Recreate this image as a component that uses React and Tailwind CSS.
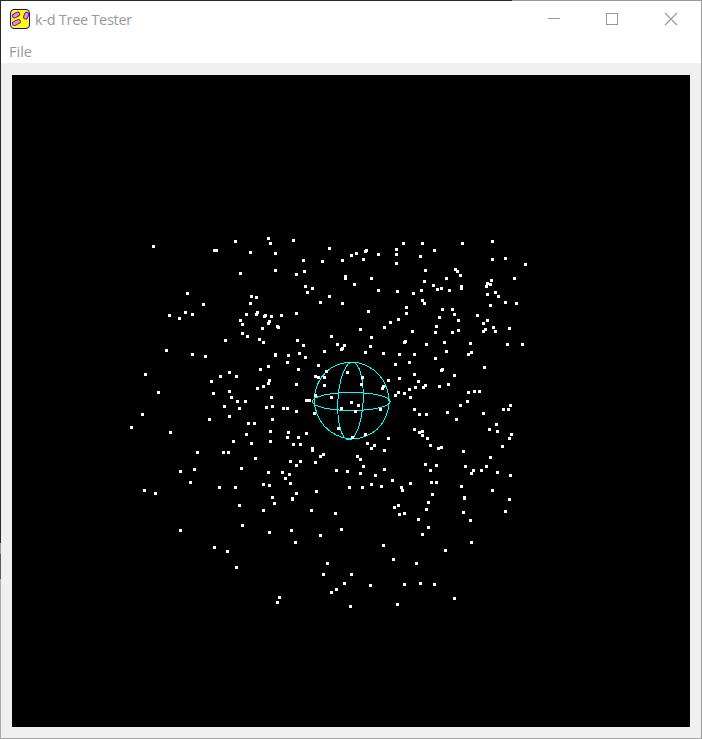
import React from "react";

// Point cloud, grouped by patch. Coordinates inside a patch are thirds of a pixel.
const PATCHES = [
  [120, 230, "100,49 283,61 289,61 346,34 391,67 361,130 202,190 250,223 394,199 409,202 391,220 148,256 178,265 196,247 217,253 379,253 412,247 409,253 361,271 367,283 367,310 382,319 418,328 316,331 139,361 217,373 256,379"],
  [250, 230, "55,25 61,40 130,31 76,70 1,67 238,55 160,91 217,94 277,91 304,76 319,70 346,64 349,61 385,73 340,88 76,121 139,133 163,124 286,139 286,145 313,163 364,145 166,169 172,187 187,175 385,181 4,199 19,202 1,220 211,217 238,199 277,220 22,247 19,253 43,259 46,256 64,259 94,256 139,250 355,244 58,274 55,280 37,295 82,289 85,292 331,298 403,292 28,328 40,337 142,331 160,346 244,319 262,343 283,346 277,355 274,358 364,322 361,349 76,373 76,376 115,376 148,370 166,382 223,364 346,367 400,370"],
  [380, 230, "70,40 127,40 49,58 49,73 121,79 163,61 247,40 337,34 337,88 376,85 436,103 49,100 136,121 226,118 232,124 241,136 199,145 403,145 133,154 160,166 172,178 184,175 208,181 244,169 244,175 319,169 322,160 331,163 334,151 52,184 100,190 124,181 127,211 133,220 322,193 346,187 355,199 376,217 409,220 331,226 79,232 79,250 187,238 217,238 178,262 223,253 235,271 292,256 55,268 31,277 13,292 322,271 310,280 97,304 169,289 166,307 217,307 235,301 310,304 316,298 340,292 346,304 388,295 76,334 73,337 139,343 193,337 271,340 382,343 427,343 10,370 58,373 103,373 199,364 265,373 274,367 166,385"],
  [120, 350, "76,73 115,127 67,193 34,232 151,247 328,67 301,79 349,79 274,94 280,130 328,124 334,142 352,154 376,154 313,169 358,175 328,199 268,208 412,115 385,220 403,220 379,253 340,274 394,280 232,307 310,307 325,307 406,325 364,355 223,358 181,364"],
  [250, 350, "55,49 31,58 112,37 145,58 205,46 229,64 196,79 205,82 223,82 223,106 292,67 337,82 334,103 415,91 400,109 397,115 58,91 55,100 40,109 22,115 139,103 64,142 67,169 49,172 100,175 112,175 139,184 196,136 244,142 304,157 325,166 274,175 316,184 391,178 193,190 169,151 178,151 67,208 13,220 61,244 115,247 112,262 145,262 169,250 61,274 4,280 130,283 151,283 187,295 187,301 16,325 121,334 151,334 139,346 196,337 211,319 220,313 265,235 307,262 346,253 352,280 373,286 364,295 403,301 415,265 322,319 331,328 340,349 259,361 292,364 331,370 376,376 403,358 55,367 97,367 118,373 106,385"],
  [380, 350, "46,43 88,37 58,85 103,73 115,94 187,58 184,61 223,76 313,52 136,106 130,112 106,112 178,109 205,103 88,118 73,130 55,127 46,136 91,142 265,127 283,124 298,124 262,154 241,166 391,166 385,178 370,178 310,190 103,178 118,193 139,193 202,187 229,208 349,223 328,238 352,244 394,253 388,265 103,238 127,244 118,247 127,256 142,265 151,286 175,295 184,292 367,289 250,304 331,322 136,343 169,346 151,361 256,349 280,361 274,370 304,361 319,349 352,367 391,376 37,391"],
  [120, 470, "73,61 106,70 211,37 298,52 346,52 358,106 367,166 181,181 283,232 322,244 349,292"],
  [250, 470, "40,43 58,46 106,25 118,13 121,40 139,70 67,82 73,100 127,85 127,88 40,121 184,121 199,64 58,187 124,181 136,217 211,196 256,130 274,178 298,52 337,52 364,43 394,49 232,280 220,313 304,313 283,340 259,358 244,367 361,346 88,382 82,397 301,409 400,226"],
  [380, 470, "91,40 64,52 67,61 154,37 169,37 157,73 145,97 139,118 55,106 43,112 58,133 73,130 115,148 145,172 127,193 244,49 253,82 253,85 337,61 388,88 376,124 250,127 271,151 274,217 196,241 40,268 109,280 73,343 121,340 163,343 223,385 52,403"],
];

const POINTS = PATCHES.flatMap(([ox, oy, list]) =>
  list.split(" ").map((pair) => {
    const [x, y] = pair.split(",").map(Number);
    return [ox + Math.round((x - 1) / 3) - 1, oy + Math.round((y - 1) / 3) - 1];
  })
);

function AppIcon() {
  return (
    <svg width="20" height="21" viewBox="0 0 20 21" className="shrink-0">
      <rect x="0.5" y="0.5" width="19" height="19" rx="3.5" fill="#ffff00" stroke="#0000e0" />
      <g strokeLinecap="round" fill="none">
        <path stroke="#60206a" strokeWidth="5" d="M4.5 6.8L7.6 5.2M4.5 14.5L8.2 12.6M15.6 8L16.6 5.4" />
        <path stroke="#f080f0" strokeWidth="3.2" d="M4.5 6.8L7.6 5.2M4.5 14.5L8.2 12.6M15.6 8L16.6 5.4" />
      </g>
    </svg>
  );
}

function Scene() {
  return (
    <svg width="678" height="652" viewBox="12 75 678 652" className="block bg-black" shapeRendering="crispEdges">
      <g fill="none" stroke="#00ffff" strokeWidth="1">
        <ellipse cx="351.7" cy="400.5" rx="37.2" ry="38.4" transform="rotate(-20 351.7 400.5)" />
        <ellipse cx="351.3" cy="401.5" rx="39" ry="9" />
        <ellipse cx="350.5" cy="401" rx="12.6" ry="39" transform="rotate(3 350.5 401)" />
      </g>
      <g fill="#fff">
        {POINTS.map(([x, y], i) => (
          <rect key={i} x={x} y={y} width="3" height="3" />
        ))}
      </g>
    </svg>
  );
}

export default function App() {
  return (
    <div className="flex h-[739px] w-[702px] flex-col overflow-hidden font-['Open_Sans','Noto_Sans',sans-serif] text-[#999999]">
      <div className="flex h-px shrink-0">
        <div className="w-[512px] bg-[#2b2829]" />
        <div className="flex-1 bg-[#999999]" />
      </div>
      <div className="flex min-h-0 flex-1">
        <div className="flex w-px shrink-0 flex-col">
          <div className="h-[542px] bg-[#2b2829]" />
          <div className="h-[11px] bg-[#999999]" />
          <div className="h-[25px] bg-[#5a5a5a]" />
          <div className="flex-1 bg-[#aaaaaa]" />
        </div>
        <div className="flex flex-1 flex-col bg-[#f0f0f0]">
          <header className="flex h-[37px] shrink-0 items-center bg-white pl-[9px]">
            <AppIcon />
            <h1 className="ml-[5px] flex-1 whitespace-nowrap text-[14.5px] leading-[21px] tracking-[-0.28px]">k-d Tree Tester</h1>
            <svg width="132" height="15" viewBox="0 0 132 15" fill="none" stroke="#999999" className="mr-[22px]">
              <path d="M1 6.5H13" shapeRendering="crispEdges" />
              <rect x="59.5" y="1.5" width="11" height="11" shapeRendering="crispEdges" />
              <path d="M118 1L130 13M130 1L118 13" strokeWidth="1.1" />
            </svg>
          </header>
          <nav className="flex h-[25px] shrink-0 items-center bg-white pl-2 pt-[2px]">
            <span className="text-[14.5px] leading-[21px]">File</span>
          </nav>
          <main className="pl-[11px] pt-3">
            <Scene />
          </main>
        </div>
        <div className="w-px shrink-0 bg-[#999999]" />
      </div>
      <div className="h-px shrink-0 bg-[#a5a5a5]" />
    </div>
  );
}
